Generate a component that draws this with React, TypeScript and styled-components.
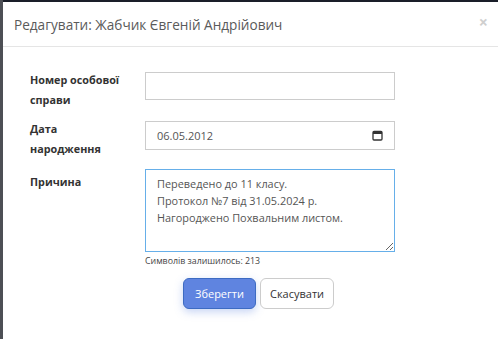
import React from "react";
import styled, { createGlobalStyle } from "styled-components";

const Global = createGlobalStyle`
  html, body { margin: 0; padding: 0; }
  body {
    background: #1a1e29;
    font-family: "Open Sans", "Noto Sans", sans-serif;
    width: 498px;
    height: 339px;
    overflow: hidden;
  }
`;

const Backdrop = styled.div`
  height: 339px;
  padding: 2px 0 0 3px;
  box-sizing: border-box;
  background: linear-gradient(to right, #4d4f55 0, #4d4f55 3px, #1a1e29 3px);
  display: flex;
`;

const Modal = styled.div`
  flex: 1;
  background: #fff;
  display: flex;
  flex-direction: column;
`;

const Header = styled.div`
  height: 44px;
  border-bottom: 1px solid #e5e5e5;
  display: flex;
  align-items: center;
  justify-content: space-between;
  padding: 0 10px 0 11px;
`;

const Title = styled.h4`
  margin: 0;
  font-size: 13.6px;
  font-weight: 400;
  color: #5a5a5a;
`;

const Close = styled.span`
  font-size: 16px;
  font-weight: 700;
  color: #cfcfcf;
  line-height: 1;
  margin-top: -5px;
`;

const Body = styled.div`
  padding: 25px 0 0 27px;
  display: flex;
  flex-direction: column;
`;

const Row = styled.div<{ $gap?: number }>`
  display: flex;
  align-items: flex-start;
  margin-bottom: ${(p) => p.$gap ?? 11}px;
`;

const Label = styled.label<{ $offset?: number }>`
  width: 115px;
  font-size: 10.8px;
  font-weight: 700;
  color: #333;
  line-height: 20px;
  margin-top: ${(p) => p.$offset ?? -2}px;
`;

const FieldCol = styled.div`
  display: flex;
  flex-direction: column;
`;

const TextInput = styled.input`
  width: 250px;
  height: 28px;
  box-sizing: border-box;
  border: 1px solid #ccc;
  padding: 0 11px;
  font-family: inherit;
  font-size: 11px;
  color: #555;
  outline: none;
  margin: 0;
`;

const DateBox = styled.div`
  width: 250px;
  height: 29px;
  box-sizing: border-box;
  border: 1px solid #ccc;
  padding: 0 11px 0 11px;
  display: flex;
  align-items: center;
  justify-content: space-between;
  font-size: 11px;
  color: #555;
`;

const TextArea = styled.textarea`
  width: 250px;
  height: 83px;
  box-sizing: border-box;
  border: 1px solid #66afe9;
  padding: 5px 11px;
  font-family: inherit;
  font-size: 10.9px;
  line-height: 17px;
  color: #555;
  outline: none;
  resize: vertical;
  margin: 0;
  display: block;
`;

const Counter = styled.div`
  font-size: 8.8px;
  color: #444;
  margin-top: 2px;
  line-height: 14px;
`;

const Actions = styled.div`
  display: flex;
  gap: 4px;
  padding-left: 153px;
  margin-top: -1px;
`;

const Button = styled.button<{ $primary?: boolean }>`
  height: 31px;
  box-sizing: border-box;
  border-radius: 6px;
  font-family: inherit;
  font-size: 11px;
  padding: 0 ${(p) => (p.$primary ? 11 : 9)}px;
  cursor: pointer;
  border: 1px solid ${(p) => (p.$primary ? "#3d6bc2" : "#ccc")};
  background: ${(p) => (p.$primary ? "#5f84e0" : "#fff")};
  color: ${(p) => (p.$primary ? "#fff" : "#333")};
  box-shadow: ${(p) => (p.$primary ? "0 3px 8px rgba(95,132,224,0.35)" : "none")};
`;

const CalendarIcon = () => (
  <svg width="11" height="11" viewBox="0 0 11 11" fill="none">
    <rect x="1" y="1.5" width="9" height="8.5" rx="1" stroke="#333" strokeWidth="1.3" />
    <rect x="1" y="1.5" width="9" height="2.5" fill="#333" />
  </svg>
);

export default function App() {
  return (
    <>
      <Global />
      <Backdrop>
        <Modal>
          <Header>
            <Title>Редагувати: Жабчик Євгеній Андрійович</Title>
            <Close>×</Close>
          </Header>
          <Body>
            <Row>
              <Label>
                Номер особової
                <br />
                справи
              </Label>
              <TextInput type="text" defaultValue="" />
            </Row>
            <Row $gap={10}>
              <Label>
                Дата
                <br />
                народження
              </Label>
              <DateBox>
                <span>06.05.2012</span>
                <CalendarIcon />
              </DateBox>
            </Row>
            <Row>
              <Label $offset={3}>Причина</Label>
              <FieldCol>
                <TextArea
                  defaultValue={"Переведено до 11 класу.\nПротокол №7 від 31.05.2024 р.\nНагороджено Похвальним листом."}
                />
                <Counter>Символів залишилось: 213</Counter>
              </FieldCol>
            </Row>
            <Actions>
              <Button $primary>Зберегти</Button>
              <Button>Скасувати</Button>
            </Actions>
          </Body>
        </Modal>
      </Backdrop>
    </>
  );
}
